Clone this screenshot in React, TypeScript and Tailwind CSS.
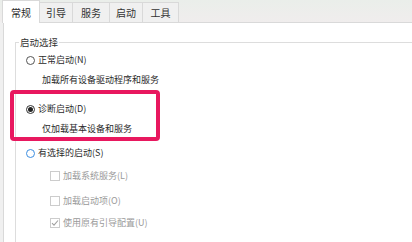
import React from "react";

const font = { fontFamily: '"Noto Sans CJK SC", "Noto Sans", sans-serif' };

function Radio({ state }: { state: "off" | "on" | "hover" }) {
  const border =
    state === "hover" ? "border-[#3d8ee0]" : state === "on" ? "border-[#333333]" : "border-[#555555]";
  return (
    <span className={`flex h-[9px] w-[9px] items-center justify-center rounded-full border bg-white ${border}`}>
      {state === "on" && <span className="h-[5px] w-[5px] rounded-full bg-[#222222]" />}
    </span>
  );
}

function Check({ checked }: { checked?: boolean }) {
  return (
    <span className="flex h-[10px] w-[10px] items-center justify-center border border-[#cccccc] bg-white">
      {checked && (
        <svg width="8" height="8" viewBox="0 0 8 8">
          <path d="M1 4.2 L3 6.2 L7 1.5" fill="none" stroke="#a0a0a0" strokeWidth="1.1" />
        </svg>
      )}
    </span>
  );
}

export default function App() {
  const tabs = [
    { label: "引导", w: "w-[33px]" },
    { label: "服务", w: "w-[37px]" },
    { label: "启动", w: "w-[33px]" },
    { label: "工具", w: "w-[36px]" },
  ];

  return (
    <div className="flex h-[242px] w-[412px] flex-col overflow-hidden bg-[#f0f0f0] text-[9px] text-[#2a2a2a]" style={font}>
      {/* tab strip */}
      <div className="flex h-[24px] items-end bg-gradient-to-b from-[#eaeeea] to-[#f0eded] pl-[2px]">
        <div className="relative z-10 -mb-px flex h-[23px] w-[38px] items-center justify-center border border-b-0 border-[#d9d9d9] bg-white text-[10px]">
          常规
        </div>
        {tabs.map((t) => (
          <div
            key={t.label}
            className={`flex h-[20px] ${t.w} items-center justify-center border-r border-t border-[#d9d9d9] bg-[#f0f0f0] text-[10px] text-[#333333]`}
          >
            {t.label}
          </div>
        ))}
      </div>

      {/* panel */}
      <div className="flex flex-1 pl-[3px]">
        <div className="flex-1 border-l border-t border-[#d9d9d9] bg-white pl-[11px] pt-[13px]">
          <fieldset className="h-[260px] border-l border-t border-[#dddddd]">
            <legend className="ml-[3px] px-[1px] text-[9.5px] leading-[12px] text-[#333333]">启动选择</legend>

            <div className="mt-[5px] flex h-[14px] items-center gap-[3px] pl-[10px]">
              <Radio state="off" />
              <span>正常启动(N)</span>
            </div>
            <div className="mt-[6px] flex h-[14px] items-center pl-[26px]">加载所有设备驱动程序和服务</div>

            <div className="-ml-[6px] mt-[3px] w-[150px] rounded-[4px] border-4 border-[#e8185f] pb-[1px] pl-[12px] pt-[8px]">
              <div className="flex h-[14px] items-center gap-[3px]">
                <Radio state="on" />
                <span>诊断启动(D)</span>
              </div>
              <div className="mt-[6px] flex h-[14px] items-center pl-[16px]">仅加载基本设备和服务</div>
            </div>

            <div className="mt-[5px] flex h-[14px] items-center gap-[3px] pl-[10px]">
              <Radio state="hover" />
              <span>有选择的启动(S)</span>
            </div>

            <div className="flex flex-col pl-[34px] text-[#9a9a9a]">
              <div className="mt-[9px] flex h-[14px] items-center gap-[3px]">
                <Check />
                <span>加载系统服务(L)</span>
              </div>
              <div className="mt-[11px] flex h-[14px] items-center gap-[3px]">
                <Check />
                <span>加载启动项(O)</span>
              </div>
              <div className="mt-[8px] flex h-[14px] items-center gap-[3px]">
                <Check checked />
                <span>使用原有引导配置(U)</span>
              </div>
            </div>
          </fieldset>
        </div>
      </div>
    </div>
  );
}
